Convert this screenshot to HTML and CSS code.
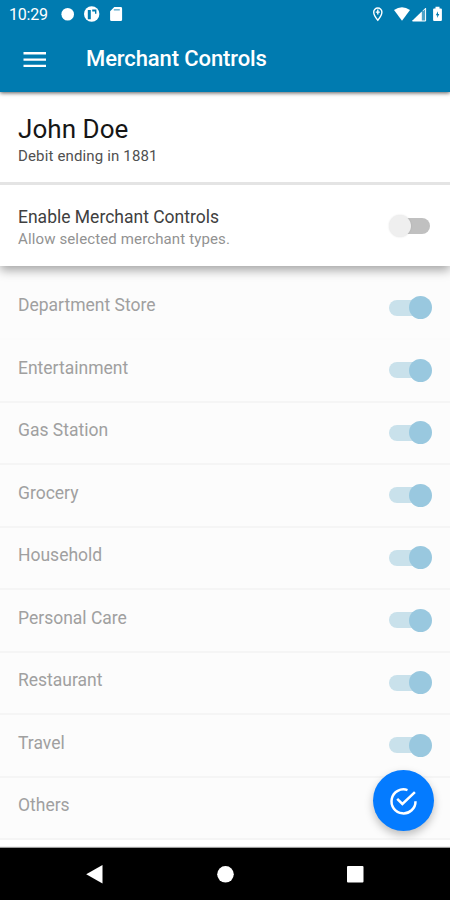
FILE: index.html
```
<!DOCTYPE html>
<html lang="en">
<head>
<meta charset="utf-8">
<title>Merchant Controls</title>
<link rel="stylesheet" href="styles.css">
</head>
<body>
<div class="screen">
  <header class="top">
    <div class="status">
      <span class="clock">10:29</span>
      <svg class="notifications" width="64" height="18" viewBox="0 0 64 18" fill="#fff">
        <circle cx="7.7" cy="9.2" r="6.3"/>
        <circle cx="31.7" cy="9" r="7.7"/>
        <path d="M27.800 5h3v9.200h-3zM32.200 4.600h4.200v4.200h-1.400V6.600h-2.800z" fill="#007bb0"/>
        <path d="M54.300 2h6.400a1.400 1.400 0 0 1 1.400 1.400v11.300a1.400 1.400 0 0 1-1.400 1.400h-9.200a1.400 1.400 0 0 1-1.400-1.400V6.200z"/>
        <path d="M53.800 4.800h6" stroke="#007bb0" stroke-opacity=".55" stroke-width="1.600"/>
      </svg>
      <svg class="system" width="74" height="18" viewBox="0 0 74 18" fill="#fff">
        <path d="M7.800 15.200C5.300 12.400 3.700 9.700 3.700 7.100a4.100 4.100 0 0 1 8.200 0c0 2.600-1.600 5.300-4.100 8.100z" fill="none" stroke="#fff" stroke-width="1.400"/>
        <path d="M7.800 4.600v5M5.800 7.100h4" stroke="#fff" stroke-width="1.400"/>
        <path d="M24 5Q32 -.3 40 5L32 15.700z"/>
        <path d="M42 16 55.800 2.700V16z" fill-opacity=".3"/>
        <path d="M42 16 51.800 6.500V16z"/>
        <path d="M53 5.800 55.600 3.200V16H42.500" fill="none" stroke="#fff" stroke-width="1"/>
        <path d="M65.500 3.400V1.800h4v1.600h1.400a1 1 0 0 1 1 1V15a1 1 0 0 1-1 1h-6.800a1 1 0 0 1-1-1V4.400a1 1 0 0 1 1-1z"/>
        <path d="M68 6.300 65.800 10.200h1.400v2.900l2.100-4H68z" fill="#007bb0"/>
      </svg>
    </div>
    <div class="bar">
      <svg class="menu" width="24" height="18" viewBox="0 0 24 18"><path d="M.5 3.300h22.500M.5 9.600h22.500M.5 15.900h22.500" stroke="#fff" stroke-width="2.400"/></svg>
      <h1 class="title">Merchant Controls</h1>
    </div>
  </header>
  <section class="account">
    <div class="name">John Doe</div>
    <div class="card">Debit ending in 1881</div>
  </section>
  <section class="master">
    <div>
      <div class="label">Enable Merchant Controls</div>
      <div class="hint">Allow selected merchant types.</div>
    </div>
    <span class="toggle off"></span>
  </section>
  <main class="list">
    <div class="row"><span>Department Store</span><i class="toggle"></i></div>
    <div class="row"><span>Entertainment</span><i class="toggle"></i></div>
    <div class="row"><span>Gas Station</span><i class="toggle"></i></div>
    <div class="row"><span>Grocery</span><i class="toggle"></i></div>
    <div class="row"><span>Household</span><i class="toggle"></i></div>
    <div class="row"><span>Personal Care</span><i class="toggle"></i></div>
    <div class="row"><span>Restaurant</span><i class="toggle"></i></div>
    <div class="row"><span>Travel</span><i class="toggle"></i></div>
    <div class="row"><span>Others</span></div>
  </main>
  <button class="fab" aria-label="Save">
    <svg width="30" height="30" viewBox="0 0 30 30" fill="none" stroke="#fff" stroke-width="2.500"><path d="M18.500 4.100A12 12 0 1 0 26.500 15.200M8.200 12.800l5.200 5.200L25.900 6.200"/></svg>
  </button>
  <nav class="nav">
    <svg width="450" height="52" viewBox="0 0 450 52" fill="#fff"><path d="M86.200 26.200 102.500 17v18.400z"/><circle cx="225.500" cy="26.300" r="8.300"/><rect x="347" y="18" width="16.500" height="16.500" rx="1"/></svg>
  </nav>
</div>
</body>
</html>
```
FILE: styles.css
```
* { box-sizing: border-box; }
body { margin: 0; font-family: Roboto, "Liberation Sans", sans-serif; background: #fff; }
svg { display: block; }
.screen { position: relative; width: 450px; height: 900px; overflow: hidden; display: flex; flex-direction: column; }
.top { position: relative; z-index: 2; flex: none; height: 92px; background: #007bb0; color: #fff; box-shadow: 0 1px 4px rgba(0,0,0,.65); }
.status { display: flex; height: 28px; align-items: center; padding: 0 6px 0 9px; }
.clock { width: 51px; font-size: 16px; letter-spacing: -.2px; line-height: 18px; padding-top: 1px; }
.system { margin-left: auto; }
.bar { display: flex; align-items: center; height: 62px; padding-left: 22.5px; }
.title { margin: 0 0 0 39.5px; font-size: 22px; font-weight: 500; line-height: 28px; letter-spacing: -.1px; }
.account { position: relative; z-index: 1; flex: none; height: 93px; padding: 20px 18px 0; background: #fff; border-bottom: 3px solid #e4e4e4; }
.name { font-size: 26px; line-height: 34px; letter-spacing: .05px; color: #161616; }
.card { font-size: 15px; line-height: 20px; letter-spacing: .15px; color: #505050; }
.master { flex: none; display: flex; justify-content: space-between; height: 81px; padding: 20px 18px 0; background: #fff; box-shadow: 0 4px 10px rgba(0,0,0,.36); position: relative; }
.label { font-size: 17.5px; line-height: 24px; color: #404040; }
.hint { font-size: 15px; line-height: 20px; letter-spacing: .13px; color: #929292; }
.toggle { position: relative; flex: none; width: 43px; height: 24px; }
.toggle::before { content: ""; position: absolute; left: 0; top: 4px; width: 40px; height: 16px; border-radius: 8px; background: #c9e1eb; }
.toggle::after { content: ""; position: absolute; right: 0; top: .5px; width: 23px; height: 23px; border-radius: 50%; background: #99c8df; }
.off { margin-top: 9px; }
.off::before { left: 1px; background: #c0c0c0; }
.off::after { right: auto; left: 0; width: 22px; height: 22px; top: 1px; background: #efefef; box-shadow: 0 0 2px rgba(0,0,0,.12); }
.list { flex: none; height: 582px; background: #fff; }
.row { display: flex; align-items: center; justify-content: space-between; height: 62.5px; padding: 0 18px; border-bottom: 2px solid #f5f5f5; background: #fcfcfc; color: #a0a0a0; font-size: 17.5px; }
.row:first-child { height: 74px; padding-top: 11px; border-bottom-color: #fbfbfb; }
.row span { line-height: 24px; padding-bottom: 5px; }
.fab { position: absolute; z-index: 3; left: 373px; top: 770px; width: 61px; height: 61px; padding: 0; border: 0; border-radius: 50%; display: grid; place-items: center; background: #047bff; box-shadow: 0 4px 9px rgba(0,0,0,.25); }
.nav { position: relative; flex: none; height: 52px; background: #000; box-shadow: 0 -1px 1px rgba(0,0,0,.4); }
```
